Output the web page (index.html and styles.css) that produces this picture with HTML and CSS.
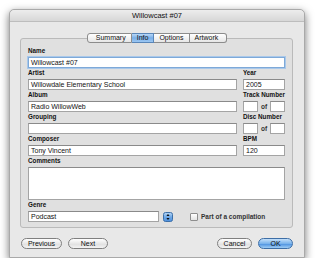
FILE: index.html
```html
<!DOCTYPE html>
<html>
<head>
<link rel="stylesheet" href="styles.css">
</head>
<body>
	<div class="janela">
		<div class="titulo">Willowcast #07</div>
		<div class="conteudo">
			<div class="abas">
				<span class="aba">Summary</span>
				<span class="aba ativa">Info</span>
				<span class="aba">Options</span>
				<span class="aba">Artwork</span>
			</div>
			<div class="grupo">
				<div class="campos">
					<div class="celula larga">
						<p class="rotulo">Name</p>
						<div class="entrada foco">Willowcast #07</div>
					</div>
					<div class="celula">
						<p class="rotulo">Artist</p>
						<div class="entrada">Willowdale Elementary School</div>
					</div>
					<div class="celula">
						<p class="rotulo">Year</p>
						<div class="entrada">2005</div>
					</div>
					<div class="celula">
						<p class="rotulo">Album</p>
						<div class="entrada">Radio WillowWeb</div>
					</div>
					<div class="celula">
						<p class="rotulo">Track Number</p>
						<div class="par"><div class="entrada"></div><span>of</span><div class="entrada"></div></div>
					</div>
					<div class="celula">
						<p class="rotulo">Grouping</p>
						<div class="entrada"></div>
					</div>
					<div class="celula">
						<p class="rotulo">Disc Number</p>
						<div class="par"><div class="entrada"></div><span>of</span><div class="entrada"></div></div>
					</div>
					<div class="celula">
						<p class="rotulo">Composer</p>
						<div class="entrada">Tony Vincent</div>
					</div>
					<div class="celula">
						<p class="rotulo">BPM</p>
						<div class="entrada">120</div>
					</div>
					<div class="celula larga">
						<p class="rotulo">Comments</p>
						<div class="entrada texto"></div>
					</div>
				</div>
				<div class="celula genero">
					<p class="rotulo">Genre</p>
					<div class="linha_genero">
						<div class="entrada combo">Podcast</div>
						<svg class="passo" width="10" height="10" viewBox="0 0 10 10">
							<defs>
								<linearGradient id="azul" x1="0" y1="0" x2="0" y2="1">
									<stop offset="0" stop-color="#b7d7f6"/>
									<stop offset="0.5" stop-color="#6fa8e6"/>
									<stop offset="1" stop-color="#4d8fdc"/>
								</linearGradient>
							</defs>
							<rect x="0.5" y="0.5" width="9" height="9" rx="2" fill="url(#azul)" stroke="#3c6fa8"/>
							<path d="M5 2 L6.6 4 L3.4 4 Z M5 8 L6.6 6 L3.4 6 Z" fill="#111"/>
						</svg>
						<span class="caixa"></span>
						<span class="compilacao">Part of a compilation</span>
					</div>
				</div>
			</div>
			<div class="botoes">
				<div class="lado">
					<button class="botao prev">Previous</button>
					<button class="botao next">Next</button>
				</div>
				<div class="lado">
					<button class="botao cancel">Cancel</button>
					<button class="botao ok">OK</button>
				</div>
			</div>
		</div>
	</div>
</body>
</html>
```

FILE: styles.css
```css
body{
	margin: 0;
	background-color: white;
	font-family: "Liberation Sans", Arial, sans-serif;
	color: #111;
}

.janela{
	width: 296px;
	margin: 9px 0 0 9px;
	background-color: #e8e8e8;
	border-radius: 5px 5px 0 0;
	box-shadow: 0 3px 8px rgba(0,0,0,0.55);
	border: 1px solid #a9a9a9;
	box-sizing: border-box;
}

.titulo{
	height: 11px;
	line-height: 11px;
	font-size: 7.5px;
	text-align: center;
	background: linear-gradient(#ededed, #d7d7d7);
	border-radius: 5px 5px 0 0;
	border-bottom: 1px solid #bdbdbd;
}

.conteudo{
	padding: 11px 11px 8px 10px;
}

.abas{
	display: flex;
	justify-content: center;
	position: relative;
	z-index: 1;
	margin-bottom: -5px;
	margin-left: 1px;
}

.aba{
	height: 8px;
	line-height: 8px;
	padding: 0 5px;
	font-size: 7px;
	background: linear-gradient(#ffffff, #e6e6e6);
	border: 1px solid #8c8c8c;
	border-left: none;
}

.aba:first-child{
	border-left: 1px solid #8c8c8c;
	border-radius: 3px 0 0 3px;
	padding-left: 8px;
}

.aba:last-child{
	border-radius: 0 3px 3px 0;
	padding-right: 8px;
}

.aba.ativa{
	background: linear-gradient(#b8d8f8, #78aee8 50%, #9cc7f2);
	border-color: #5a86b8;
}

.grupo{
	background-color: #e0e0e0;
	border: 1px solid #bababa;
	border-radius: 3px;
	padding: 7px 7px 5px 7px;
}

.campos{
	display: grid;
	grid-template-columns: 1fr 42px;
	column-gap: 6px;
}

.larga{
	grid-column: 1 / 3;
}

.rotulo{
	margin: 0 0 2px 0;
	font-size: 6.3px;
	font-weight: bold;
	line-height: 9px;
	height: 9px;
}

.entrada{
	height: 11px;
	box-sizing: border-box;
	background-color: white;
	border: 1px solid #a4a4a4;
	border-top-color: #8a8a8a;
	font-size: 7px;
	line-height: 9px;
	padding: 0 2px;
	white-space: nowrap;
	overflow: hidden;
}

.entrada.foco{
	border-color: #7ea9d8;
	box-shadow: 0 0 0 1px #a9c8ea;
}

.entrada.texto{
	height: 33px;
}

.par{
	display: flex;
	align-items: center;
	font-size: 6.5px;
	font-weight: bold;
	color: #333;
}

.par .entrada{
	width: 15px;
}

.par span{
	flex: 1;
	text-align: center;
}

.linha_genero{
	display: flex;
	align-items: center;
}

.combo{
	width: 131px;
}

.passo{
	margin-left: 4px;
}

.caixa{
	width: 6px;
	height: 6px;
	margin-left: 17px;
	background: linear-gradient(#ffffff, #e4e4e4);
	border: 1px solid #8e8e8e;
	border-radius: 1px;
}

.compilacao{
	margin-left: 3px;
	font-size: 6.5px;
	font-weight: bold;
	color: #333;
}

.botoes{
	display: flex;
	justify-content: space-between;
	margin-top: 10px;
	padding: 0 0 0 1px;
}

.lado{
	display: flex;
	gap: 6px;
}

.botao{
	height: 11px;
	padding: 0;
	font-family: "Liberation Sans", Arial, sans-serif;
	font-size: 7px;
	line-height: 9px;
	color: #111;
	background: linear-gradient(#ffffff, #e2e2e2 60%, #f3f3f3);
	border: 1px solid #7f7f7f;
	border-radius: 6px;
}

.botao.prev{
	width: 41px;
}

.botao.next{
	width: 40px;
}

.botao.cancel{
	width: 35px;
}

.botao.ok{
	width: 35px;
	background: linear-gradient(#c4e0fa, #7ab3ec 50%, #4d92e0 55%, #9fcdf6);
	border-color: #3d6ea6;
}
```
